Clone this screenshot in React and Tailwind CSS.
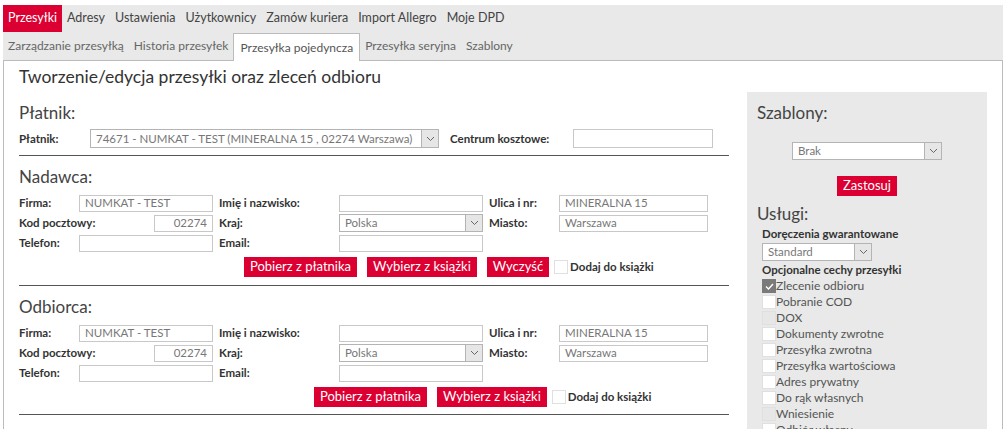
import React from 'react'

const font = { fontFamily: 'Lato, "Open Sans", sans-serif' }

const topTabs = ['Przesyłki', 'Adresy', 'Ustawienia', 'Użytkownicy', 'Zamów kuriera', 'Import Allegro', 'Moje DPD']
const subTabs = ['Zarządzanie przesyłką', 'Historia przesyłek', 'Przesyłka pojedyncza', 'Przesyłka seryjna', 'Szablony']

const options = [
  { label: 'Zlecenie odbioru', state: 'checked' },
  { label: 'Pobranie COD' },
  { label: 'DOX', state: 'disabled' },
  { label: 'Dokumenty zwrotne' },
  { label: 'Przesyłka zwrotna' },
  { label: 'Przesyłka wartościowa' },
  { label: 'Adres prywatny' },
  { label: 'Do rąk własnych' },
  { label: 'Wniesienie', state: 'disabled' },
  { label: 'Odbiór własny' },
]

function Chevron() {
  return (
    <svg width="9" height="6" viewBox="0 0 9 6" className="text-[#666]">
      <polyline points="1,1 4.5,4.5 8,1" fill="none" stroke="currentColor" strokeWidth="1" />
    </svg>
  )
}

function Input({ value = '', className = '', right = false }) {
  return (
    <div
      className={`flex h-[17px] items-center border border-[#c8c8c8] bg-white px-[5px] text-[11.5px] text-[#777] ${right ? 'justify-end' : ''} ${className}`}
    >
      {value}
    </div>
  )
}

function Select({ value, className = '' }) {
  return (
    <div className={`flex h-[18px] items-stretch border border-[#b4b4b4] bg-white text-[11.5px] text-[#777] ${className}`}>
      <span className="flex flex-1 items-center truncate px-[5px]">{value}</span>
      <span className="flex w-[17px] items-center justify-center border-l border-[#b4b4b4] bg-[#e6e6e6]">
        <Chevron />
      </span>
    </div>
  )
}

function Label({ children, className = '' }) {
  return <span className={`text-[11.5px] font-bold text-[#333] ${className}`}>{children}</span>
}

function RedButton({ children, className = '' }) {
  return (
    <button className={`flex h-[20px] items-center bg-[#dc0032] px-[6px] text-[13px] text-white ${className}`}>
      {children}
    </button>
  )
}

function Box({ state }) {
  if (state === 'checked') {
    return (
      <span className="flex h-[14px] w-[14px] items-center justify-center bg-[#7a7a7a]">
        <svg width="9" height="7" viewBox="0 0 9 7">
          <polyline points="1,3.5 3.5,6 8,1" fill="none" stroke="#fff" strokeWidth="1.4" />
        </svg>
      </span>
    )
  }
  if (state === 'disabled') {
    return <span className="h-[14px] w-[14px] border border-[#e0e0e0] bg-[#e6e7e6]" />
  }
  return <span className="h-[14px] w-[14px] border border-[#e0e0e0] bg-white" />
}

function AddressBlock({ title, buttonsOffset, showClear }) {
  return (
    <div>
      <h2 className="flex h-[20px] items-center text-[17px] text-[#444]">{title}</h2>
      <div className="mt-[6px] flex flex-col">
        <div className="flex h-[20px] items-center">
          <div className="flex w-[194px] items-center justify-between">
            <Label>Firma:</Label>
            <Input value="NUMKAT - TEST" className="w-[134px]" />
          </div>
          <Label className="ml-[6px] w-[120px]">Imię i nazwisko:</Label>
          <Input className="w-[144px]" />
          <Label className="ml-[6px] w-[70px]">Ulica i nr:</Label>
          <Input value="MINERALNA 15" className="w-[149px]" />
        </div>
        <div className="flex h-[20px] items-center">
          <div className="flex w-[194px] items-center justify-between">
            <Label>Kod pocztowy:</Label>
            <Input value="02274" right className="w-[59px]" />
          </div>
          <Label className="ml-[6px] w-[120px]">Kraj:</Label>
          <Select value="Polska" className="w-[144px]" />
          <Label className="ml-[6px] w-[70px]">Miasto:</Label>
          <Input value="Warszawa" className="w-[149px]" />
        </div>
        <div className="flex h-[20px] items-center">
          <div className="flex w-[194px] items-center justify-between">
            <Label>Telefon:</Label>
            <Input className="w-[134px]" />
          </div>
          <Label className="ml-[6px] w-[120px]">Email:</Label>
          <Input className="w-[144px]" />
        </div>
      </div>
      <div className={`mt-[4px] flex items-center gap-[10px] ${buttonsOffset}`}>
        <RedButton>Pobierz z płatnika</RedButton>
        <RedButton>Wybierz z książki</RedButton>
        {showClear && <RedButton>Wyczyść</RedButton>}
        <div className="-ml-[5px] flex items-center gap-[2px]">
          <Box />
          <Label>Dodaj do książki</Label>
        </div>
      </div>
    </div>
  )
}

export default function App() {
  return (
    <div className="h-[429px] w-[1008px] overflow-hidden bg-white pt-[5px]" style={font}>
      <div className="ml-[3px] w-[1000px]">
        <nav className="flex h-[27px] items-stretch bg-[#e8e9e8]">
          {topTabs.map((t, i) => (
            <span
              key={t}
              className={`flex items-center px-[5px] text-[12.5px] ${i === 0 ? 'bg-[#dc0032] text-white' : 'text-[#444]'}`}
            >
              {t}
            </span>
          ))}
        </nav>
        <nav className="flex h-[29px] items-stretch border-b border-[#bbb] bg-[#e8e9e8]">
          {subTabs.map((t, i) => (
            <span
              key={t}
              className={`flex items-center px-[5px] text-[12px] ${
                i === 2 ? '-mb-px mt-px border border-b-0 border-[#bbb] bg-white px-[6px] text-[#555]' : 'text-[#666]'
              }`}
            >
              {t}
            </span>
          ))}
        </nav>
        <div className="flex h-[400px] border-x border-[#bbb] bg-white">
          <div className="ml-[15px] w-[710px]">
            <h1 className="mt-[6px] flex h-[20px] items-center text-[17.5px] text-[#333]">
              Tworzenie/edycja przesyłki oraz zleceń odbioru
            </h1>
            <h2 className="mt-[16px] flex h-[20px] items-center text-[17px] text-[#444]">Płatnik:</h2>
            <div className="mt-[6px] flex h-[19px] items-center">
              <Label className="w-[71px]">Płatnik:</Label>
              <Select value="74671 - NUMKAT - TEST (MINERALNA 15 , 02274 Warszawa)" className="h-[19px] w-[349px]" />
              <Label className="ml-[11px] w-[123px]">Centrum kosztowe:</Label>
              <Input className="h-[19px] w-[140px]" />
            </div>
            <div className="mt-[7px] h-px bg-[#555]" />
            <div className="mt-[11px]">
              <AddressBlock title="Nadawca:" buttonsOffset="ml-[225px]" showClear />
            </div>
            <div className="mt-[8px] h-px bg-[#555]" />
            <div className="mt-[11px]">
              <AddressBlock title="Odbiorca:" buttonsOffset="ml-[295px]" />
            </div>
            <div className="mt-[7px] h-px bg-[#555]" />
          </div>
          <aside className="ml-[18px] mt-[31px] flex w-[240px] flex-col bg-[#e8e9e8] pl-[10px]">
            <h2 className="mt-[11px] flex h-[20px] items-center text-[17px] text-[#444]">Szablony:</h2>
            <div className="mt-[19px] flex justify-center pr-[10px]">
              <Select value="Brak" className="w-[150px]" />
            </div>
            <div className="mt-[16px] flex justify-center pr-[10px]">
              <RedButton className="h-[19px]">Zastosuj</RedButton>
            </div>
            <h2 className="mt-[8px] flex h-[20px] items-center text-[17px] text-[#444]">Usługi:</h2>
            <div className="ml-[5px] flex flex-col">
              <Label className="mt-[3px] leading-[14px]">Doręczenia gwarantowane</Label>
              <Select value="Standard" className="mt-[2px] h-[18px] w-[110px]" />
              <Label className="mt-[2px] leading-[14px]">Opcjonalne cechy przesyłki</Label>
              <div className="mt-[1px] flex flex-col">
                {options.map((o) => (
                  <div key={o.label} className="flex h-[16px] items-center">
                    <Box state={o.state} />
                    <span className="text-[12px] text-[#555]">{o.label}</span>
                  </div>
                ))}
              </div>
            </div>
          </aside>
        </div>
      </div>
    </div>
  )
}
